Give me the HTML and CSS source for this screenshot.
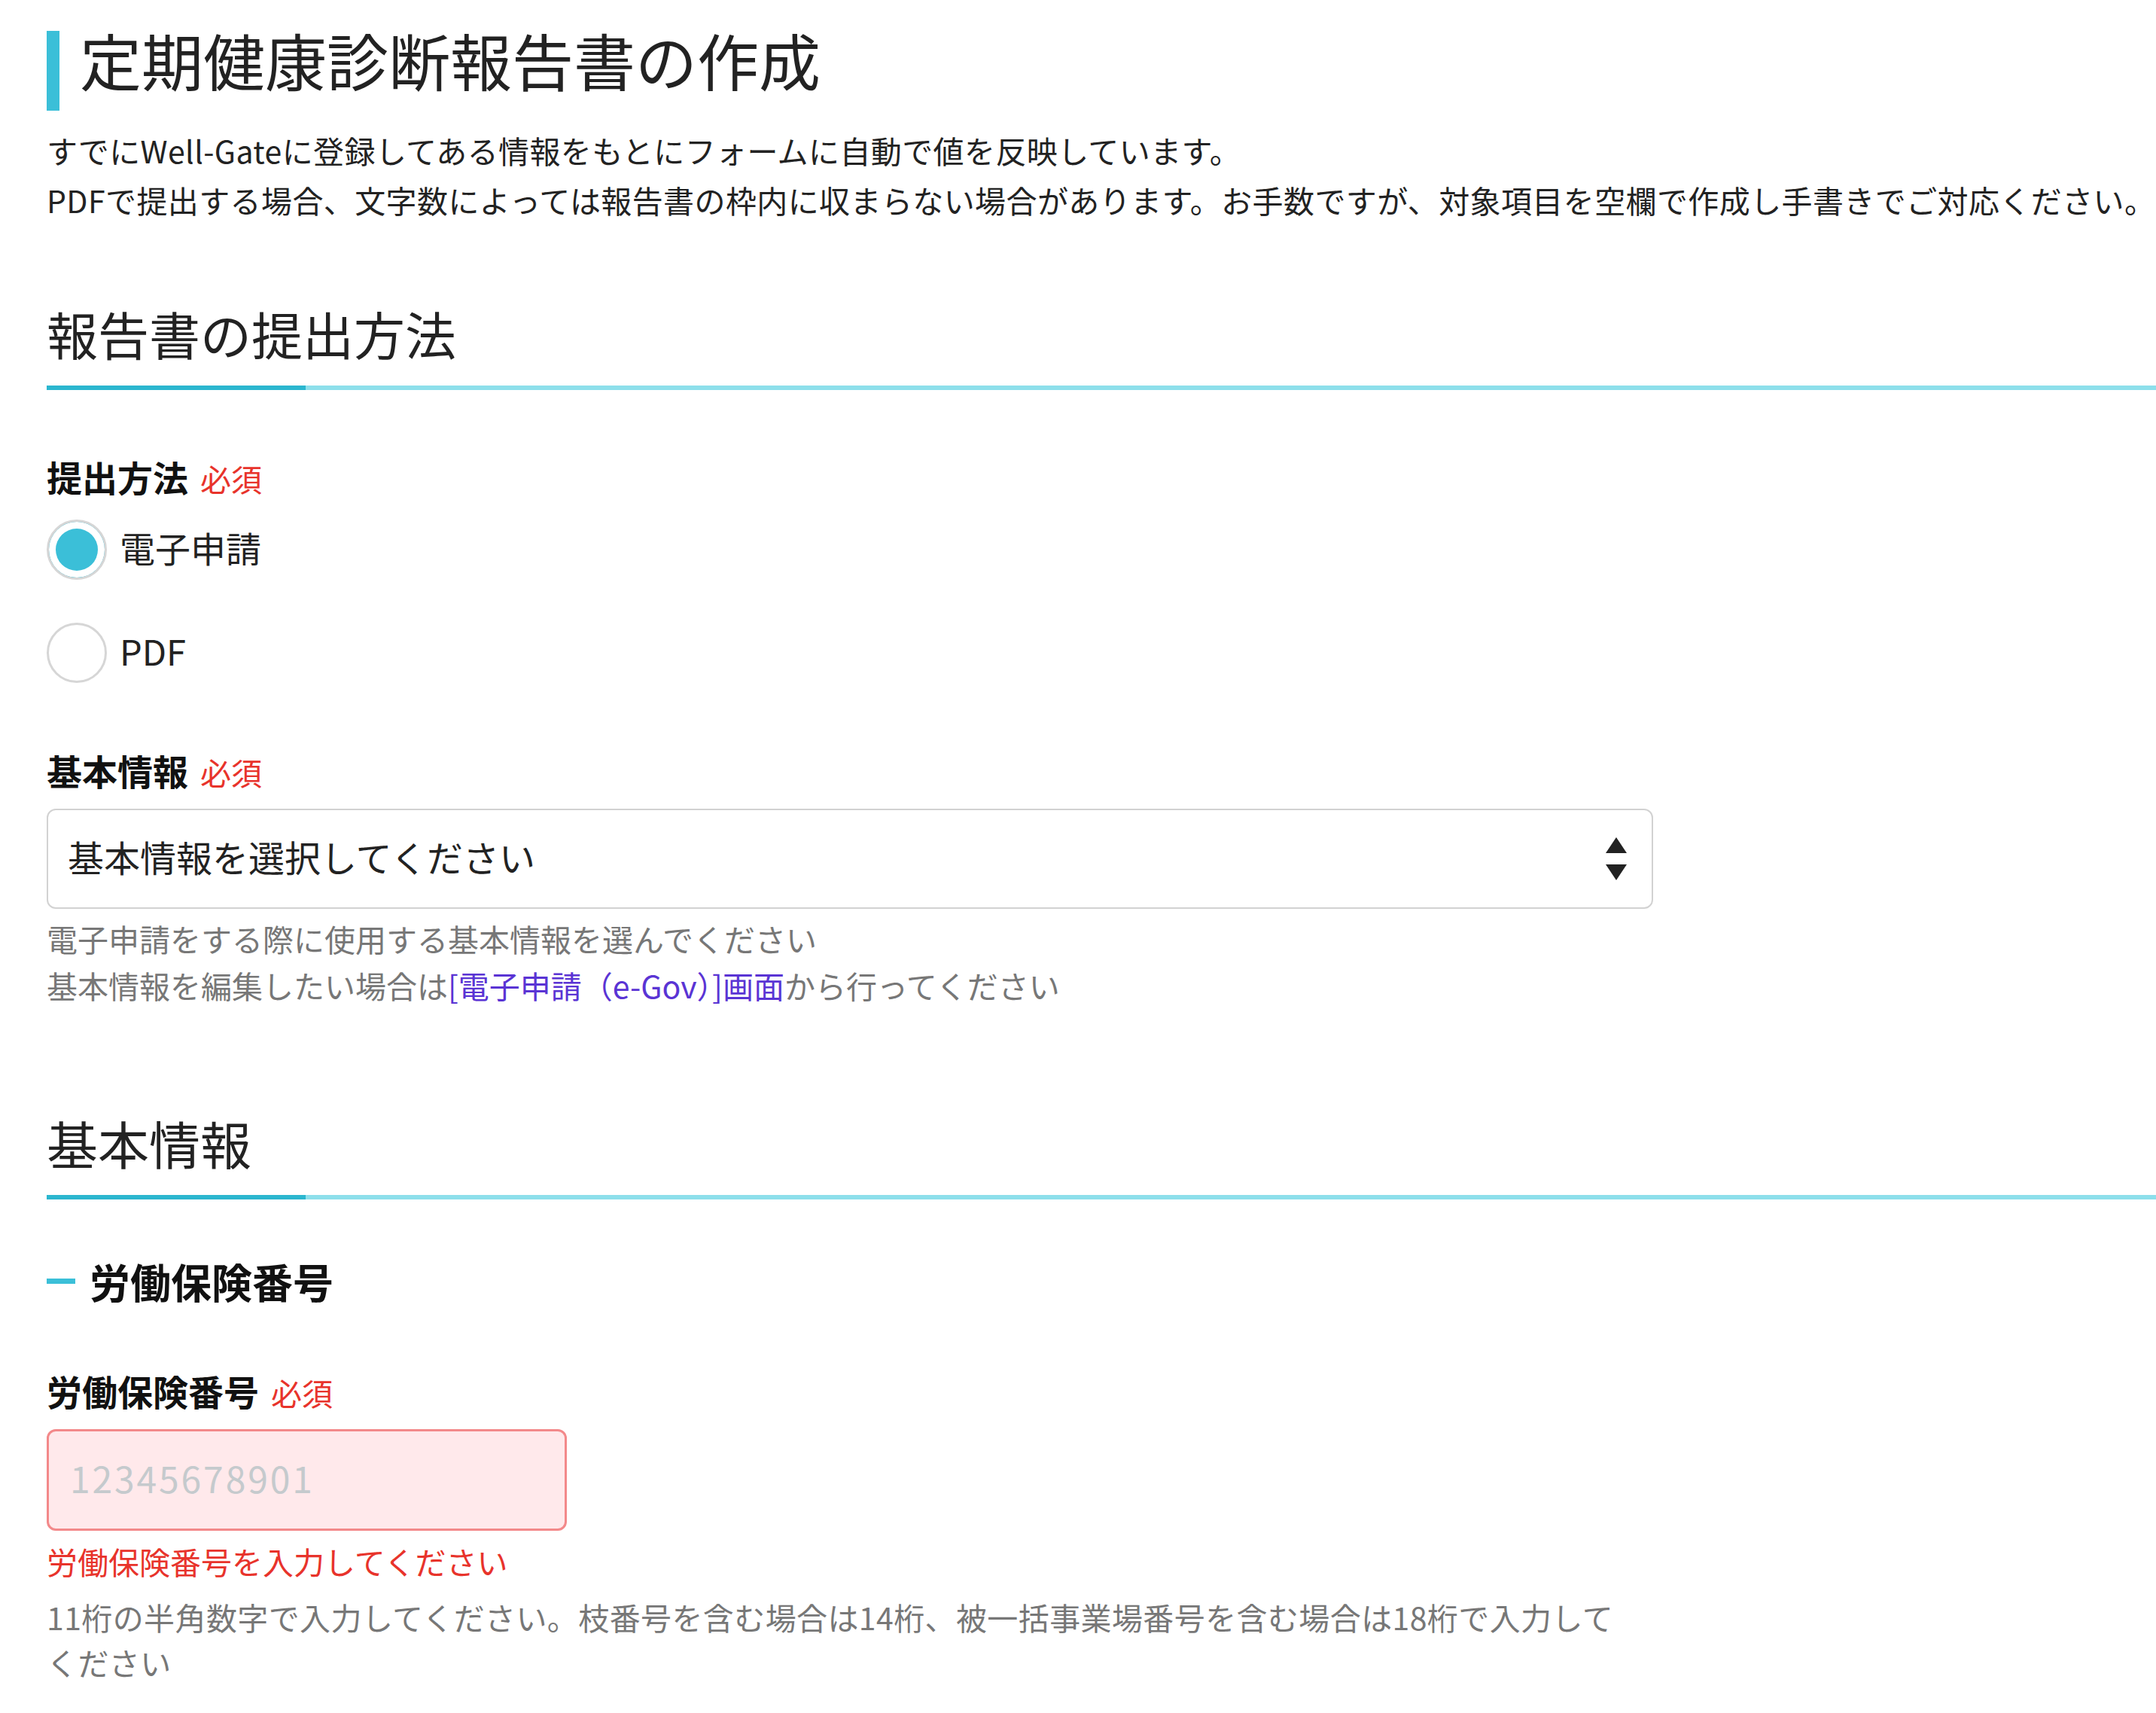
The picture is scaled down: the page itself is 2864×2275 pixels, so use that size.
FILE: index.html
```html
<!DOCTYPE html>
<html lang="ja">
<head>
<meta charset="utf-8">
<title>定期健康診断報告書の作成</title>
<link rel="stylesheet" href="styles.css">
</head>
<body>
<main class="page">
  <h1 class="page-title">定期健康診断報告書の作成</h1>
  <p class="lead">すでにWell-Gateに登録してある情報をもとにフォームに自動で値を反映しています。<br>PDFで提出する場合、文字数によっては報告書の枠内に収まらない場合があります。お手数ですが、対象項目を空欄で作成し手書きでご対応ください。</p>

  <section class="section">
    <h2 class="section-title">報告書の提出方法</h2>

    <div class="field field-first">
      <div class="field-label">提出方法<span class="req">必須</span></div>
      <div class="radio-group">
        <label class="radio"><input type="radio" name="method" checked><span>電子申請</span></label>
        <label class="radio"><input type="radio" name="method"><span>PDF</span></label>
      </div>
    </div>

    <div class="field field-next">
      <div class="field-label">基本情報<span class="req">必須</span></div>
      <div class="select">
        <span class="select-value">基本情報を選択してください</span>
        <svg class="select-arrows" width="28" height="57" viewBox="0 0 28 57" aria-hidden="true">
          <polygon points="14,0 28,21 0,21" fill="#222"/>
          <polygon points="0,36 28,36 14,57" fill="#222"/>
        </svg>
      </div>
      <p class="help help-select">電子申請をする際に使用する基本情報を選んでください<br>基本情報を編集したい場合は<a class="link" href="#">[電子申請（e-Gov）]画面</a>から行ってください</p>
    </div>
  </section>

  <section class="section section-basic">
    <h2 class="section-title">基本情報</h2>
    <h3 class="sub-title">労働保険番号</h3>

    <div class="field field-sub">
      <div class="field-label">労働保険番号<span class="req">必須</span></div>
      <input class="text-input is-error" type="text" placeholder="12345678901">
      <p class="error">労働保険番号を入力してください</p>
      <p class="help help-input">11桁の半角数字で入力してください。枝番号を含む場合は14桁、被一括事業場番号を含む場合は18桁で入力してください</p>
    </div>
  </section>
</main>
</body>
</html>
```

FILE: styles.css
```css
* {
  box-sizing: border-box;
}

body {
  margin: 0;
  background: #fff;
  color: #222;
  font-family: "Noto Sans CJK JP", "Noto Sans", sans-serif;
}

.page {
  padding: 41px 0 120px 62px;
}

/* page heading with accent bar */
.page-title {
  margin: 0;
  padding: 0 0 30px 27px;
  border-left: 17px solid #3bbfd8;
  font-size: 82px;
  font-weight: 400;
  line-height: 76px;
  color: #222;
}

.lead {
  margin: 19px 0 0;
  font-size: 41px;
  line-height: 66px;
  letter-spacing: 0.4px;
  color: #222;
}

/* section heading with two-tone underline */
.section-title {
  margin: 94px 0 0;
  padding-bottom: 24px;
  font-size: 68px;
  font-weight: 400;
  line-height: 102px;
  color: #222;
  background:
    linear-gradient(#2bb6cf, #2bb6cf) left bottom / 344px 6px no-repeat,
    linear-gradient(#8ddfeb, #8ddfeb) left bottom / 100% 6px no-repeat;
}

.section-basic .section-title {
  margin-top: 128px;
}

.sub-title {
  display: flex;
  align-items: center;
  gap: 19px;
  margin: 68px 0 0;
  font-size: 54px;
  font-weight: 700;
  line-height: 81px;
  color: #111;
}

.sub-title::before {
  content: "";
  width: 38px;
  height: 7px;
  background: #3bbfd8;
}

/* form fields */
.field-first {
  margin-top: 80px;
}

.field-next {
  margin-top: 81px;
}

.field-sub {
  margin-top: 70px;
}

.field-label {
  font-size: 47px;
  font-weight: 700;
  line-height: 70px;
  color: #111;
}

.req {
  margin-left: 16px;
  font-size: 41px;
  font-weight: 400;
  color: #e8332b;
}

.radio-group {
  display: flex;
  flex-direction: column;
  gap: 57px;
  margin-top: 20px;
}

.radio {
  display: flex;
  align-items: center;
  gap: 17px;
  height: 80px;
  font-size: 47px;
  line-height: 70px;
  color: #222;
}

.radio span {
  padding-bottom: 7px;
}

.radio input {
  appearance: none;
  -webkit-appearance: none;
  flex: none;
  width: 80px;
  height: 80px;
  margin: 0;
  border: 3px solid #d6d6d6;
  border-radius: 50%;
  background: #fff;
}

.radio input:checked {
  background: #3bbfd8;
  box-shadow: inset 0 0 0 9px #fff;
}

.select {
  display: flex;
  align-items: center;
  justify-content: space-between;
  width: 2134px;
  height: 133px;
  margin-top: 14px;
  padding: 0 33px 0 26px;
  border: 2px solid #d2d2d2;
  border-radius: 12px;
  background: #fff;
  font-size: 48px;
  color: #222;
}

.select-value {
  padding-bottom: 8px;
}

.select-arrows {
  flex: none;
}

.help {
  margin: 0;
  font-size: 41px;
  color: #777;
}

.help-select {
  margin-top: 8px;
  line-height: 62px;
}

.link {
  color: #5a34d4;
  text-decoration: none;
}

.text-input {
  display: block;
  width: 691px;
  height: 135px;
  margin-top: 14px;
  padding: 0 0 8px 28px;
  border: 3px solid #f3898a;
  border-radius: 12px;
  background: #ffe9eb;
  font-family: inherit;
  font-size: 48px;
  letter-spacing: 0.06em;
  color: #222;
  outline: none;
}

.text-input::placeholder {
  color: #c5cacd;
}

.error {
  margin: 10px 0 0;
  font-size: 41px;
  line-height: 60px;
  color: #e8332b;
}

.help-input {
  max-width: 2090px;
  margin-top: 14px;
  line-height: 60px;
  letter-spacing: 0.4px;
}
```
